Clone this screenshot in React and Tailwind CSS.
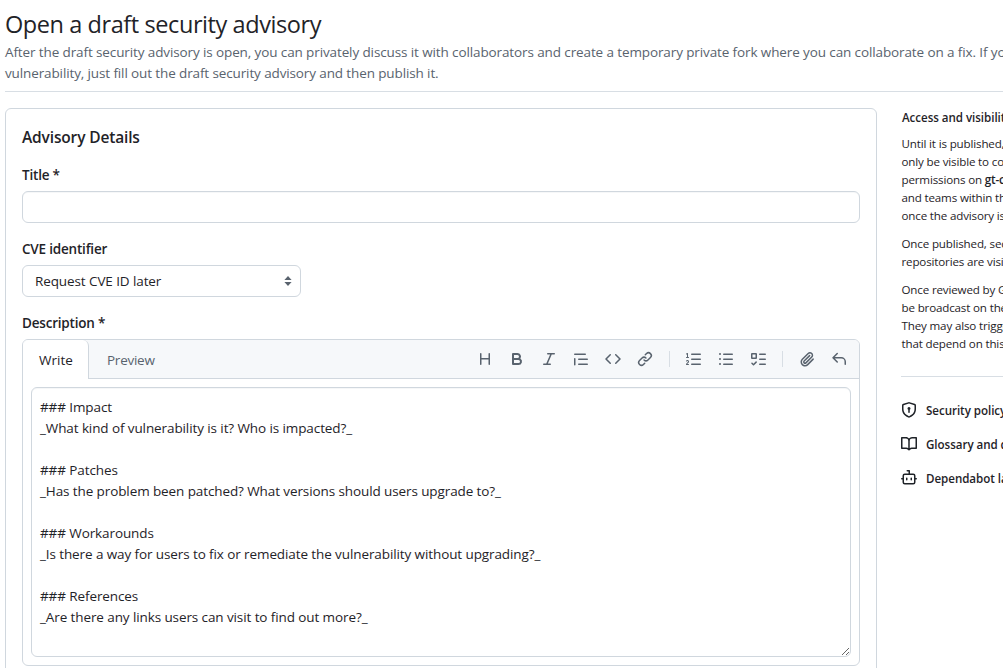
import React from "react";

const ICONS = {
  heading: ["M3.75 2a.75.75 0 0 1 .75.75V7h7V2.75a.75.75 0 0 1 1.5 0v10.5a.75.75 0 0 1-1.5 0V8.5h-7v4.75a.75.75 0 0 1-1.5 0V2.75A.75.75 0 0 1 3.75 2Z"],
  bold: ["M4 2h4.5a3.501 3.501 0 0 1 2.852 5.53A3.499 3.499 0 0 1 9.5 14H4a1 1 0 0 1-1-1V3a1 1 0 0 1 1-1Zm1 7v3h4.5a1.5 1.5 0 0 0 0-3Zm3.5-2a1.5 1.5 0 0 0 0-3H5v3Z"],
  italic: ["M6 2.75A.75.75 0 0 1 6.75 2h6.5a.75.75 0 0 1 0 1.5h-2.505l-3.858 9H9.25a.75.75 0 0 1 0 1.5h-6.5a.75.75 0 0 1 0-1.5h2.505l3.858-9H6.75A.75.75 0 0 1 6 2.75Z"],
  quote: ["M1.75 2.5h10.5a.75.75 0 0 1 0 1.5H1.75a.75.75 0 0 1 0-1.5Zm4 5h8.5a.75.75 0 0 1 0 1.5h-8.5a.75.75 0 0 1 0-1.5Zm0 5h8.5a.75.75 0 0 1 0 1.5h-8.5a.75.75 0 0 1 0-1.5ZM2.5 7.75v6a.75.75 0 0 1-1.5 0v-6a.75.75 0 0 1 1.5 0Z"],
  code: ["m11.28 3.22 4.25 4.25a.75.75 0 0 1 0 1.06l-4.25 4.25a.749.749 0 0 1-1.275-.326.749.749 0 0 1 .215-.734L13.94 8l-3.72-3.72a.749.749 0 0 1 .326-1.275.749.749 0 0 1 .734.215Zm-6.56 0a.751.751 0 0 1 1.042.018.751.751 0 0 1 .018 1.042L2.06 8l3.72 3.72a.749.749 0 0 1-.326 1.275.749.749 0 0 1-.734-.215L.47 8.53a.75.75 0 0 1 0-1.06Z"],
  link: ["m7.775 3.275 1.25-1.25a3.5 3.5 0 1 1 4.95 4.95l-2.5 2.5a3.5 3.5 0 0 1-4.95 0 .751.751 0 0 1 .018-1.042.751.751 0 0 1 1.042-.018 1.998 1.998 0 0 0 2.83 0l2.5-2.5a2.002 2.002 0 0 0-2.83-2.83l-1.25 1.25a.751.751 0 0 1-1.042-.018.751.751 0 0 1-.018-1.042Zm-4.69 9.64a1.998 1.998 0 0 0 2.83 0l1.25-1.25a.751.751 0 0 1 1.042.018.751.751 0 0 1 .018 1.042l-1.25 1.25a3.5 3.5 0 1 1-4.95-4.95l2.5-2.5a3.5 3.5 0 0 1 4.95 0 .751.751 0 0 1-.018 1.042.751.751 0 0 1-1.042.018 1.998 1.998 0 0 0-2.83 0l-2.5 2.5a1.998 1.998 0 0 0 0 2.83Z"],
  ordered: ["M5 3.25a.75.75 0 0 1 .75-.75h8.5a.75.75 0 0 1 0 1.5h-8.5A.75.75 0 0 1 5 3.25Zm0 5a.75.75 0 0 1 .75-.75h8.5a.75.75 0 0 1 0 1.5h-8.5A.75.75 0 0 1 5 8.25Zm0 5a.75.75 0 0 1 .75-.75h8.5a.75.75 0 0 1 0 1.5h-8.5a.75.75 0 0 1-.75-.75ZM.924 10.32a.5.5 0 0 1-.851-.525l.001-.001.001-.002.002-.004.007-.011c.097-.144.215-.273.348-.384.228-.19.588-.392 1.068-.392.468 0 .858.181 1.126.484.259.294.377.673.377 1.038 0 .987-.686 1.495-1.156 1.845l-.047.035c-.303.225-.522.4-.654.597h1.357a.5.5 0 0 1 0 1H.5a.5.5 0 0 1-.5-.5c0-1.005.692-1.52 1.167-1.875l.035-.025c.531-.396.8-.625.8-1.078a.57.57 0 0 0-.128-.376C1.806 10.068 1.695 10 1.5 10a.658.658 0 0 0-.429.163.835.835 0 0 0-.144.153ZM2.003 2.5V6h.503a.5.5 0 0 1 0 1H.5a.5.5 0 0 1 0-1h.503V3.308l-.28.14a.5.5 0 0 1-.446-.895l1.003-.5a.5.5 0 0 1 .723.447Z"],
  unordered: ["M5.75 2.5h8.5a.75.75 0 0 1 0 1.5h-8.5a.75.75 0 0 1 0-1.5Zm0 5h8.5a.75.75 0 0 1 0 1.5h-8.5a.75.75 0 0 1 0-1.5Zm0 5h8.5a.75.75 0 0 1 0 1.5h-8.5a.75.75 0 0 1 0-1.5ZM2 14a1 1 0 1 1 0-2 1 1 0 0 1 0 2Zm1-6a1 1 0 1 1-2 0 1 1 0 0 1 2 0ZM2 4a1 1 0 1 1 0-2 1 1 0 0 1 0 2Z"],
  tasklist: ["M2 2h4a1 1 0 0 1 1 1v4a1 1 0 0 1-1 1H2a1 1 0 0 1-1-1V3a1 1 0 0 1 1-1Zm4.655 8.595a.75.75 0 0 1 0 1.06L4.03 14.28a.75.75 0 0 1-1.06 0l-1.5-1.5a.749.749 0 0 1 .326-1.275.749.749 0 0 1 .734.215l.97.97 2.095-2.095a.75.75 0 0 1 1.06 0ZM9.75 2.5h5.5a.75.75 0 0 1 0 1.5h-5.5a.75.75 0 0 1 0-1.5Zm0 5h5.5a.75.75 0 0 1 0 1.5h-5.5a.75.75 0 0 1 0-1.5Zm0 5h5.5a.75.75 0 0 1 0 1.5h-5.5a.75.75 0 0 1 0-1.5Zm-7.25-9v3h3v-3Z"],
  paperclip: ["M12.212 3.02a1.753 1.753 0 0 0-2.478.003l-5.83 5.83a3.007 3.007 0 0 0-.88 2.127c0 .795.315 1.551.88 2.116.567.567 1.333.89 2.126.89.79 0 1.548-.321 2.116-.89l5.48-5.48a.75.75 0 0 1 1.061 1.06l-5.48 5.48a4.492 4.492 0 0 1-3.177 1.33c-1.2 0-2.345-.487-3.187-1.33a4.483 4.483 0 0 1-1.32-3.177c0-1.195.475-2.341 1.32-3.186l5.83-5.83a3.25 3.25 0 0 1 5.553 2.297c0 .863-.343 1.691-.953 2.301L7.439 12.39c-.375.377-.884.59-1.416.593a1.998 1.998 0 0 1-1.412-.593 1.992 1.992 0 0 1 0-2.828l5.48-5.48a.751.751 0 0 1 1.042.018.751.751 0 0 1 .018 1.042l-5.48 5.48a.492.492 0 0 0 0 .707.499.499 0 0 0 .352.154.51.51 0 0 0 .356-.154l5.833-5.827a1.755 1.755 0 0 0 0-2.481Z"],
  reply: ["M6.78 1.97a.75.75 0 0 1 0 1.06L3.81 6h6.44A4.75 4.75 0 0 1 15 10.75v2.5a.75.75 0 0 1-1.5 0v-2.5a3.25 3.25 0 0 0-3.25-3.25H3.81l2.97 2.97a.749.749 0 0 1-.326 1.275.749.749 0 0 1-.734-.215L1.47 7.28a.75.75 0 0 1 0-1.06l4.25-4.25a.75.75 0 0 1 1.06 0Z"],
  shield: ["m8.533.133 5.25 1.68A1.75 1.75 0 0 1 15 3.48V7c0 1.566-.32 3.182-1.303 4.682-.983 1.498-2.585 2.813-5.032 3.855a1.697 1.697 0 0 1-1.33 0c-2.447-1.042-4.049-2.357-5.032-3.855C1.32 10.182 1 8.566 1 7V3.48a1.755 1.755 0 0 1 1.217-1.667l5.25-1.68a1.748 1.748 0 0 1 1.066 0Zm-.61 1.429.001.001-5.25 1.68a.251.251 0 0 0-.174.237V7c0 1.36.275 2.666 1.057 3.859.784 1.194 2.121 2.342 4.366 3.298a.196.196 0 0 0 .154 0c2.245-.957 3.582-2.103 4.366-3.297C13.225 9.666 13.5 8.358 13.5 7V3.48a.25.25 0 0 0-.174-.238l-5.25-1.68a.25.25 0 0 0-.153 0ZM9.5 6.5c0 .536-.286 1.032-.75 1.3v2.45a.75.75 0 0 1-1.5 0V7.8A1.5 1.5 0 1 1 9.5 6.5Z"],
  book: ["M0 1.75A.75.75 0 0 1 .75 1h4.253c1.227 0 2.317.59 3 1.501A3.743 3.743 0 0 1 11.006 1h4.245a.75.75 0 0 1 .75.75v10.5a.75.75 0 0 1-.75.75h-4.507a2.25 2.25 0 0 0-1.591.659l-.622.621a.75.75 0 0 1-1.06 0l-.622-.621A2.25 2.25 0 0 0 5.258 13H.75a.75.75 0 0 1-.75-.75Zm7.251 10.324.004-5.073-.002-2.253A2.25 2.25 0 0 0 5.003 2.5H1.5v9h3.757a3.75 3.75 0 0 1 1.994.574ZM8.755 4.75l-.004 7.322a3.752 3.752 0 0 1 1.992-.572H14.5v-9h-3.495a2.25 2.25 0 0 0-2.25 2.25Z"],
  dependabot: [
    "M5.75 7.5a.75.75 0 0 1 .75.75v1.5a.75.75 0 0 1-1.5 0v-1.5a.75.75 0 0 1 .75-.75Zm5.25.75a.75.75 0 0 0-1.5 0v1.5a.75.75 0 0 0 1.5 0v-1.5Z",
    "M6.25 0h2A.75.75 0 0 1 9 .75V3.5h3.25a2.25 2.25 0 0 1 2.25 2.25V8h.75a.75.75 0 0 1 0 1.5h-.75v2.75a2.25 2.25 0 0 1-2.25 2.25h-8.5a2.25 2.25 0 0 1-2.25-2.25V9.5H.75a.75.75 0 0 1 0-1.5h.75V5.75A2.25 2.25 0 0 1 3.75 3.5H7.5v-2H6.25a.75.75 0 0 1 0-1.5ZM3 5.75v6.5c0 .414.336.75.75.75h8.5a.75.75 0 0 0 .75-.75v-6.5a.75.75 0 0 0-.75-.75h-8.5a.75.75 0 0 0-.75.75Z",
  ],
};

function Icon({ name }) {
  return (
    <svg viewBox="0 0 16 16" width="16" height="16" fill="currentColor" className="shrink-0" aria-hidden="true">
      {ICONS[name].map((d) => (
        <path key={d} d={d} />
      ))}
    </svg>
  );
}

function Tool({ name }) {
  return (
    <button type="button" className="flex h-8 w-8 items-center justify-center">
      <Icon name={name} />
    </button>
  );
}

function Divider() {
  return <div className="mx-2 h-4 w-px bg-[#d8dee4]" />;
}

function Label({ children }) {
  return <label className="block h-[21px] text-[13.5px] leading-[21px] font-semibold tracking-[-0.2px]">{children}</label>;
}

const TEMPLATE = `### Impact
_What kind of vulnerability is it? Who is impacted?_

### Patches
_Has the problem been patched? What versions should users upgrade to?_

### Workarounds
_Is there a way for users to fix or remediate the vulnerability without upgrading?_

### References
_Are there any links users can visit to find out more?_
`;

function Editor() {
  return (
    <div className="mt-[5px] flex h-[327px] flex-col rounded-md border border-[#d0d7de]">
      <div className="flex h-[39px] shrink-0 rounded-t-[5px] bg-[#f6f8fa] text-[13.5px]">
        <button type="button" className="w-[66px] rounded-t-md border-r border-[#d0d7de] bg-white pt-px pl-px">
          Write
        </button>
        <div className="flex flex-1 items-center border-b border-[#d0d7de] pr-1 text-[#59636e]">
          <button type="button" className="pt-[3px] pl-[18px] tracking-[-0.25px]">
            Preview
          </button>
          <div className="ml-auto flex items-center">
            <Tool name="heading" />
            <Tool name="bold" />
            <Tool name="italic" />
            <Tool name="quote" />
            <Tool name="code" />
            <Tool name="link" />
            <Divider />
            <Tool name="ordered" />
            <Tool name="unordered" />
            <Tool name="tasklist" />
            <Divider />
            <Tool name="paperclip" />
            <Tool name="reply" />
          </div>
        </div>
      </div>
      <textarea
        spellCheck={false}
        defaultValue={TEMPLATE}
        className="mx-2 mt-2 block h-[270px] resize overflow-auto rounded-md border border-[#d0d7de] bg-white px-2 pt-[9px] pb-[7px] text-[13.5px] leading-[21px] tracking-[-0.1px] shadow-[inset_0_1px_0_rgba(208,215,222,0.2)] outline-none"
      />
    </div>
  );
}

function SideLink({ icon, children }) {
  return (
    <a className="flex h-[18px] items-center gap-2 text-[11.6px] font-semibold">
      <Icon name={icon} />
      <span className="pt-0.5 pl-px tracking-[-0.05px]">{children}</span>
    </a>
  );
}

function Sidebar() {
  return (
    <aside className="flex w-[296px] shrink-0 flex-col text-[11.6px] leading-[18px] whitespace-nowrap">
      <h4 className="mt-px pl-px font-semibold tracking-[-0.05px]">Access and visibility</h4>
      <p className="mt-2 pl-[0.5px] tracking-[-0.16px]">
        Until it is published,
        <br />
        only be visible to col
        <br />
        permissions on <b className="font-semibold">gt-c</b>
        <br />
        and teams within the
        <br />
        once the advisory is
      </p>
      <p className="mt-[10px] pl-[0.5px] tracking-[-0.16px]">
        Once published, sec
        <br />
        repositories are visib
      </p>
      <p className="mt-[10px] pl-[0.5px] tracking-[-0.16px]">
        Once reviewed by G
        <br />
        be broadcast on the
        <br />
        They may also trigge
        <br />
        that depend on this
      </p>
      <div className="mt-[23px] border-t border-[#d8dee4]" />
      <nav className="mt-6 flex flex-col gap-4">
        <SideLink icon="shield">Security policy</SideLink>
        <SideLink icon="book">Glossary and d</SideLink>
        <SideLink icon="dependabot">Dependabot la</SideLink>
      </nav>
    </aside>
  );
}

export default function App() {
  return (
    <div className="h-[668px] w-full overflow-hidden bg-white pl-[5px] font-['Open_Sans','Noto_Sans',sans-serif] text-[#1f2328]">
      <div className="w-[1192px]">
        <header className="border-b border-[#d8dee4] pt-[7px] pb-[7px] whitespace-nowrap">
          <h1 className="h-[35px] text-[23.5px] leading-[35px] tracking-[-0.42px]">Open a draft security advisory</h1>
          <p className="text-[13.5px] leading-[21px] text-[#59636e]">
            <span className="tracking-[-0.113px]">
              After the draft security advisory is open, you can privately discuss it with collaborators and create a
              temporary private fork where you can collaborate on a fix. If you
            </span>
            <br />
            <span className="tracking-[-0.12px]">vulnerability, just fill out the draft security advisory and then publish it.</span>
          </p>
        </header>
        <div className="mt-4 flex gap-6">
          <main className="h-[600px] w-[872px] shrink-0 rounded-md border border-[#d0d7de] px-4 pt-4">
            <h2 className="h-6 text-[15.5px] leading-6 font-semibold tracking-[-0.15px]">Advisory Details</h2>
            <div className="mt-4">
              <Label>Title *</Label>
              <input className="mt-[5px] block h-8 w-full rounded-md border border-[#d0d7de] px-3 shadow-[inset_0_1px_0_rgba(208,215,222,0.2)] outline-none" />
            </div>
            <div className="mt-4">
              <Label>CVE identifier</Label>
              <button
                type="button"
                className="mt-[5px] flex h-8 w-[279px] items-center justify-between rounded-md border border-[#d0d7de] pr-2 pl-3 text-[13.5px] tracking-[-0.1px]"
              >
                Request CVE ID later
                <svg width="8" height="10" viewBox="0 0 8 10" fill="#59636e" aria-hidden="true">
                  <path d="M4 0 7.6 4H.4ZM4 10 .4 6h7.2Z" />
                </svg>
              </button>
            </div>
            <div className="mt-4">
              <Label>Description *</Label>
              <Editor />
            </div>
          </main>
          <Sidebar />
        </div>
      </div>
    </div>
  );
}
